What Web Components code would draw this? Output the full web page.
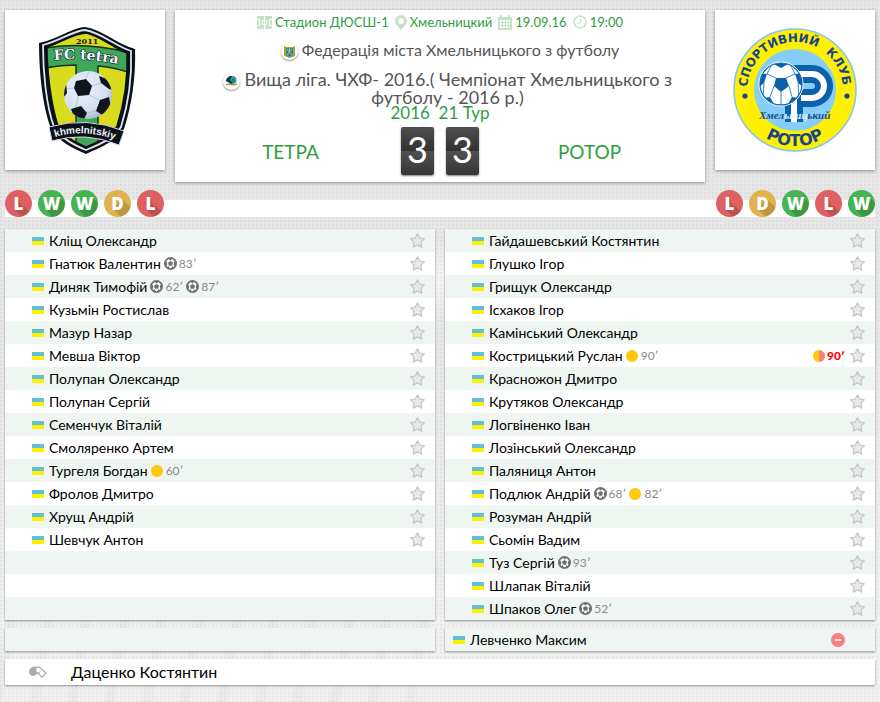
<!DOCTYPE html>
<html lang="uk">
<head>
  <meta charset="utf-8">
  <meta name="viewport" content="width=device-width, initial-scale=1">
  <title>Тетра - Ротор</title>
  <style>
    body {
      margin: 0;
      min-height: 100vh;
      font-family: Lato, "Open Sans", sans-serif;
      font-size: 14px;
      color: #000;
      background-color: #e6e6e6;
      background-image:
        conic-gradient(at 2px 2px, transparent 75%, rgba(0, 0, 0, 0.045) 0),
        radial-gradient(circle at 50% 40%, rgba(255, 255, 255, 0.6), transparent 40px),
        repeating-linear-gradient(100deg, transparent 0 14px, rgba(0, 0, 0, 0.025) 18px 24px, transparent 28px 37px),
        linear-gradient(#e6e6e6 0%, #e8e8e8 50%, #f1f1f1 90%);
      background-size: 4px 4px, 100% 100%, 50% 20%, 100% 100%;
      background-position: 0 0, 0 0, 0 100%, 0 0;
      background-repeat: repeat, no-repeat, no-repeat, no-repeat;
    }
  </style>
</head>
<body>

<match-page>
  <team-card slot="home"><logo-tetra></logo-tetra></team-card>
  <match-header slot="header" home="ТЕТРА" away="РОТОР" home-score="3" away-score="3">
    <meta-item slot="meta" icon="field">Стадион ДЮСШ-1</meta-item>
    <meta-item slot="meta" icon="pin">Хмельницкий</meta-item>
    <meta-item slot="meta" icon="calendar">19.09.16</meta-item>
    <meta-item slot="meta" icon="clock">19:00</meta-item>
    <span slot="federation">Федерація міста Хмельницького з футболу</span>
    <span slot="league">Вища ліга. ЧХФ- 2016.( Чемпіонат Хмельницького з футболу - 2016 р.)</span>
    <span slot="round">2016&nbsp; 21 Тур</span>
  </match-header>
  <team-card slot="away"><logo-rotor></logo-rotor></team-card>

  <form-badges slot="form" results="LWWDL"></form-badges>
  <form-badges slot="form" results="LDWLW"></form-badges>

  <team-lineup slot="lineup">
    <player-row>Кліщ Олександр</player-row>
    <player-row>Гнатюк Валентин<match-event slot="events" type="goal">83′</match-event></player-row>
    <player-row>Диняк Тимофій<match-event slot="events" type="goal">62′</match-event><match-event slot="events" type="goal">87′</match-event></player-row>
    <player-row>Кузьмін Ростислав</player-row>
    <player-row>Мазур Назар</player-row>
    <player-row>Мевша Віктор</player-row>
    <player-row>Полупан Олександр</player-row>
    <player-row>Полупан Сергій</player-row>
    <player-row>Семенчук Віталій</player-row>
    <player-row>Смоляренко Артем</player-row>
    <player-row>Тургеля Богдан<match-event slot="events" type="yellow">60′</match-event></player-row>
    <player-row>Фролов Дмитро</player-row>
    <player-row>Хрущ Андрій</player-row>
    <player-row>Шевчук Антон</player-row>
    <player-row empty></player-row>
    <player-row empty></player-row>
    <player-row empty></player-row>
  </team-lineup>
  <team-lineup slot="lineup">
    <player-row>Гайдашевський Костянтин</player-row>
    <player-row>Глушко Ігор</player-row>
    <player-row>Грищук Олександр</player-row>
    <player-row>Ісхаков Ігор</player-row>
    <player-row>Камінський Олександр</player-row>
    <player-row>Кострицький Руслан<match-event slot="events" type="yellow">90′</match-event><match-event slot="status" type="second-yellow">90′</match-event></player-row>
    <player-row>Красножон Дмитро</player-row>
    <player-row>Крутяков Олександр</player-row>
    <player-row>Логвіненко Іван</player-row>
    <player-row>Лозінський Олександр</player-row>
    <player-row>Паляниця Антон</player-row>
    <player-row>Подлюк Андрій<match-event slot="events" type="goal">68′</match-event><match-event slot="events" type="yellow">82′</match-event></player-row>
    <player-row>Розуман Андрій</player-row>
    <player-row>Сьомін Вадим</player-row>
    <player-row>Туз Сергій<match-event slot="events" type="goal">93′</match-event></player-row>
    <player-row>Шлапак Віталій</player-row>
    <player-row>Шпаков Олег<match-event slot="events" type="goal">52′</match-event></player-row>
  </team-lineup>

  <team-lineup slot="subs">
    <player-row empty></player-row>
  </team-lineup>
  <team-lineup slot="subs">
    <player-row sub>Левченко Максим</player-row>
  </team-lineup>

  <referee-bar slot="referee">Даценко Костянтин</referee-bar>
</match-page>

<script>
const ICONS = {
  field: `
    <svg width="15" height="13" viewBox="0 0 15 13">
      <rect width="15" height="13" fill="#c3e3c6"/>
      <g fill="none" stroke="#fff">
        <path d="M7.5 0v13M0 3.5h2.5v6H0M15 3.5h-2.5v6H15"/>
        <circle cx="7.500" cy="6.500" r="2.500"/>
      </g>
    </svg>`,
  pin: `
    <svg width="12" height="15" viewBox="0 0 12 15">
      <path fill="#c3e3c6" fill-rule="evenodd" d="M6 0a6 6 0 0 1 6 6c0 3-3 5-6 9C3 11 0 9 0 6a6 6 0 0 1 6-6zm0 3a3 3 0 1 0 0 6 3 3 0 0 0 0-6z"/>
    </svg>`,
  calendar: `
    <svg width="14" height="15" viewBox="0 0 14 15">
      <path fill="#c3e3c6" d="M0 2h2V0h2v2h6V0h2v2h2v13H0z"/>
      <path fill="#fff" d="M2 5h2v2H2zm3 0h2v2H5zm3 0h2v2H8zm3 0h1v2h-1zM2 8h2v2H2zm3 0h2v2H5zm3 0h2v2H8zm3 0h1v2h-1zM2 11h2v2H2zm3 0h2v2H5zm3 0h2v2H8zm3 0h1v2h-1z"/>
    </svg>`,
  clock: `
    <svg width="14" height="14" viewBox="0 0 14 14" fill="none" stroke="#c3e3c6">
      <circle cx="7" cy="7" r="6" stroke-width="1.600"/>
      <path d="M8 3.500 7.500 7.500 4.500 9" stroke-width="1.200"/>
    </svg>`,
  goal: `
    <svg width="13" height="13" viewBox="0 0 26 26">
      <circle cx="13" cy="13" r="11.200" fill="#fff" stroke="#6f6f6f" stroke-width="3.600"/>
      <path fill="#6f6f6f" d="M13 8l5 3.600-1.900 5.800H9.900L8 11.600zM7 2h12l-6 5zM1 8l5.500 3L6 17l-4 1zM25 8l-5.500 3 .5 6 4 1zM5 22l4-4 3 6zM21 22l-4-4-3 6z"/>
    </svg>`,
  yellow: `
    <svg width="12" height="12" viewBox="0 0 12 12"><circle cx="6" cy="6" r="6" fill="#ffc80a"/></svg>`,
  "second-yellow": `
    <svg width="12" height="12" viewBox="0 0 12 12">
      <path fill="#ffc80a" d="M6 0a6 6 0 0 0 0 12z"/>
      <path fill="#ff7d7d" d="M6 0a6 6 0 0 1 0 12z"/>
    </svg>`,
};

class MatchPage extends HTMLElement {
  constructor() {
    super();
    this.attachShadow({ mode: "open" });
    this.shadowRoot.innerHTML = `
      <style>
        :host {
          display: block;
          padding: 10px 5px 16px;
        }

        .top {
          display: grid;
          grid-template-columns: 160px 1fr 160px;
          align-items: start;
          gap: 10px;
        }

        .form {
          display: flex;
          justify-content: space-between;
          margin: 8px 0 12px;
          background: linear-gradient(transparent 10px, #fff 10px);
        }

        .columns {
          display: grid;
          grid-template-columns: 1fr 1fr;
          gap: 10px;
          margin-bottom: 8px;
        }
      </style>
      <header class="top">
        <slot name="home"></slot>
        <slot name="header"></slot>
        <slot name="away"></slot>
      </header>
      <div class="form"><slot name="form"></slot></div>
      <main>
        <div class="columns"><slot name="lineup"></slot></div>
        <div class="columns"><slot name="subs"></slot></div>
      </main>
      <slot name="referee"></slot>
    `;
  }
}

class TeamCard extends HTMLElement {
  constructor() {
    super();
    this.attachShadow({ mode: "open" });
    this.shadowRoot.innerHTML = `
      <style>
        :host {
          display: block;
          background: #fff;
          box-shadow: 0 1px 3px rgba(0, 0, 0, 0.4);
        }
      </style>
      <slot></slot>
    `;
  }
}

class LogoTetra extends HTMLElement {
  constructor() {
    super();
    this.attachShadow({ mode: "open" });
    this.shadowRoot.innerHTML = `
      <style>
        :host { display: block; }
        svg { display: block; width: 100%; }
      </style>
      <svg viewBox="0 0 160 160" role="img">
        <defs>
          <clipPath id="field"><path d="M81 23C67 24 58 32 42 37C42 62 46 94 53 116C60 127 70 132 81 137C95 131 106 127 112 116C119 94 123 68 122 43C108 38 96 26 81 23Z"/></clipPath>
          <clipPath id="ball"><circle cx="83" cy="85" r="24"/></clipPath>
          <radialGradient id="shade" cx="0.400" cy="0.350" r="0.700">
            <stop offset="0" stop-color="#eef3fc"/>
            <stop offset="0.700" stop-color="#d3dff0"/>
            <stop offset="1" stop-color="#9fb4c8"/>
          </radialGradient>
          <path id="name" d="M49 50Q80 47 118 55"/>
          <path id="city" d="M50 127Q80 118 114 131"/>
        </defs>
        <path fill="#0b1118" d="M80 17C66 18 56 28 34 33C34 60 37 95 46 119C54 132 68 138 81 144C97 137 112 130 119 119C127 95 131 65 130 39C112 34 98 20 80 17Z"/>
        <path fill="none" stroke="#dfe4f5" stroke-width="1.800" d="M80 20C67 21 57 30 38 35C38 61 41 95 49 117C57 129 69 135 81 140C96 134 109 128 116 117C123 95 127 67 126 41C110 36 97 23 80 20Z"/>
        <g clip-path="url(#field)">
          <rect x="34" y="17" width="96" height="127" fill="#d8dc1c"/>
          <path fill="#3fa757" stroke="#123320" stroke-width="1.500" d="M40 38Q80 31 126 43V63Q108 57 93 56V140H71V55Q55 55 40 58Z"/>
        </g>
        <path fill="none" stroke="#0b1118" stroke-width="1.500" d="M81 23C67 24 58 32 42 37C42 62 46 94 53 116C60 127 70 132 81 137C95 131 106 127 112 116C119 94 123 68 122 43C108 38 96 26 81 23Z"/>
        <circle cx="83" cy="85" r="24" fill="url(#shade)"/>
        <g clip-path="url(#ball)">
          <path fill="#10141c" d="M71 71L81 69 87 76 84 85 73 86 69 78ZM94 66L102 69 108 80 104 79 96 73ZM95 90L104 87 106 98 99 106 91 101ZM66 99L76 96 82 103 79 109 69 107ZM58 76L61 73 62 83 58 88Z"/>
          <path fill="none" stroke="#a9b9ca" stroke-width="0.700" d="M87 76L96 73M84 85L95 90M73 86L71 97M81 69L84 61M69 78L62 79M91 101L82 103"/>
        </g>
        <path fill="#0b1118" stroke="#d6d4ea" d="M44 117Q82 106 119 121L114 135Q80 121 47 131Z"/>
        <text x="71" y="34" font-family="DejaVu Serif, serif" font-weight="bold" font-size="8" fill="#14170c">2011</text>
        <text font-family="DejaVu Serif, serif" font-weight="bold" font-size="14" fill="#f6f8ff" stroke="#0b2030" stroke-width="1.200" paint-order="stroke"><textPath href="#name">FC tetra</textPath></text>
        <text font-family="Liberation Sans, sans-serif" font-weight="bold" font-size="10" fill="#f0f2f8"><textPath href="#city">khmelnitskiy</textPath></text>
      </svg>
    `;
  }
}

class LogoRotor extends HTMLElement {
  constructor() {
    super();
    this.attachShadow({ mode: "open" });
    this.shadowRoot.innerHTML = `
      <style>
        :host { display: block; }
        svg { display: block; width: 100%; }
      </style>
      <svg viewBox="0 0 160 160" role="img">
        <defs>
          <path id="upper" d="M32 80A48 48 0 0 1 128 80"/>
          <path id="lower" d="M24 80A56 56 0 0 0 136 80"/>
          <clipPath id="ball"><circle cx="66" cy="74" r="21"/></clipPath>
        </defs>
        <circle cx="80" cy="80" r="61" fill="#fff000" stroke="#86c6ee" stroke-width="1.600"/>
        <circle cx="80" cy="80" r="41" fill="#86cdf8"/>
        <g fill="none">
          <path stroke="#0a62ac" stroke-width="18" d="M79 112V64H97A12 12 0 0 1 97 88H79"/>
          <path stroke="#fff" stroke-width="6" d="M79 112V64H97A12 12 0 0 1 97 88H86"/>
        </g>
        <circle cx="66" cy="74" r="22" fill="#fff" stroke="#fff"/>
        <circle cx="66" cy="74" r="21" fill="#fff" stroke="#0a62ac" stroke-width="1.200"/>
        <g clip-path="url(#ball)">
          <path fill="#0a62ac" d="M61 68H71L74 76 66 82 59 76ZM57 53H75L66 58ZM43 63L52 64 49 73 43 78ZM89 63L80 64 83 73 89 78ZM48 88L55 87 60 96 50 96ZM84 88L77 87 72 96 82 96Z"/>
          <path fill="none" stroke="#0a62ac" stroke-width="0.800" d="M61 68L52 64M71 68L80 64M74 76L77 87M66 82V96M59 76L55 87M52 64L57 54M80 64L75 54M49 73L48 88M83 73L84 88M60 95H72"/>
        </g>
        <circle cx="30" cy="86" r="2.600" fill="#17458c"/>
        <circle cx="132" cy="86" r="2.600" fill="#17458c"/>
        <text x="44" y="109" font-family="Liberation Serif, serif" font-style="italic" font-weight="bold" font-size="11" fill="#1b4a86">Хмел<tspan fill="#e6f2fc">ьниц</tspan>ький</text>
        <g font-weight="bold" fill="#17458c">
          <text font-family="DejaVu Sans, sans-serif" font-size="12"><textPath href="#upper" startOffset="3">СПОРТИВНИЙ</textPath></text>
          <text font-family="DejaVu Sans, sans-serif" font-size="12"><textPath href="#upper" startOffset="108">КЛУБ</textPath></text>
          <text font-family="DejaVu Sans, sans-serif" font-size="16" text-anchor="middle"><textPath href="#lower" startOffset="50%">РОТОР</textPath></text>
        </g>
      </svg>
    `;
  }
}

class MetaItem extends HTMLElement {
  connectedCallback() {
    this.attachShadow({ mode: "open" });
    this.shadowRoot.innerHTML = `
      <style>
        :host {
          display: flex;
          align-items: center;
          gap: 3px;
        }

        svg { display: block; }
      </style>
      ${ICONS[this.getAttribute("icon")]}
      <span><slot></slot></span>
    `;
  }
}

class MatchHeader extends HTMLElement {
  connectedCallback() {
    this.attachShadow({ mode: "open" });
    this.render();
  }

  render = () => {
    this.shadowRoot.innerHTML = `
      <style>
        :host {
          display: block;
          padding: 4px 5px 7px;
          background: #fff;
          box-shadow: 0 1px 3px rgba(0, 0, 0, 0.4);
          text-align: center;
          color: #555;
        }

        .meta {
          display: flex;
          justify-content: center;
          gap: 6px;
          font-size: 13px;
          line-height: 16px;
          color: #2f9e41;
        }

        h2, h1 {
          margin: 0;
          font-weight: normal;
        }

        h2 {
          margin-top: 10px;
          padding-left: 20px;
          font-size: 16px;
          line-height: 20px;
        }

        h1 {
          margin-top: 10px;
          padding: 0 25px 0 40px;
          font-size: 18px;
          line-height: 18px;
        }

        .crest {
          display: inline-block;
          width: 17px;
          height: 17px;
          margin: -4px 0;
          border-radius: 50%;
          background: #fff;
          box-shadow: 0 1px 2px rgba(0, 0, 0, 0.45);
          vertical-align: middle;
        }

        .round {
          font-size: 17px;
          line-height: 14px;
          color: #2f9e41;
        }

        .board {
          display: grid;
          grid-template-columns: 1fr auto 1fr;
          align-items: center;
          margin-top: 7px;
        }

        a {
          color: #2f9e41;
          font-size: 19px;
          text-decoration: none;
        }

        .score {
          display: flex;
          gap: 12px;
        }

        .digit {
          width: 33px;
          padding-bottom: 4px;
          border-radius: 2px;
          background: linear-gradient(#505050, #323232 49%, #777 49%, #777 51%, #505050 51%, #363636);
          box-shadow: 0 1px 2px rgba(0, 0, 0, 0.5);
          color: #fff;
          font-size: 36px;
          line-height: 44px;
        }
      </style>
      <div class="meta"><slot name="meta"></slot></div>
      <h2>
        <svg class="crest" viewBox="0 0 17 17" aria-hidden="true">
          <path fill="#a9a62a" d="M3 3l2 1h7l2-1v10l-5.500 2L3 13z"/>
          <path fill="#1d86c4" d="M5 5h7v7l-3.500 2L5 12z"/>
          <path fill="none" stroke="#c9c43c" d="M6 6l5 6M11 6l-5 6M8.500 5v4"/>
        </svg>
        <slot name="federation"></slot>
      </h2>
      <h1>
        <svg class="crest" viewBox="0 0 17 17" aria-hidden="true">
          <circle cx="9.500" cy="7" r="4" fill="#2b9cc6"/>
          <path fill="#14323f" d="M3 8c0-3 3-5 6-5L7 7l3 3-2 1z"/>
          <path fill="none" stroke="#a8a232" stroke-width="1.500" d="M3 12c3-2 7 1 11-1"/>
          <path fill="#2f7d3b" d="M9 6l2-1 1 3-2 2z"/>
        </svg>
        <slot name="league"></slot>
      </h1>
      <div class="round"><slot name="round"></slot></div>
      <div class="board">
        <a href="#home">${this.getAttribute("home")}</a>
        <div class="score">
          <span class="digit">${this.getAttribute("home-score")}</span>
          <span class="digit">${this.getAttribute("away-score")}</span>
        </div>
        <a href="#away">${this.getAttribute("away")}</a>
      </div>
    `;
  };
}

class FormBadges extends HTMLElement {
  connectedCallback() {
    const colors = { W: "#46b450", L: "#de6060", D: "#e0b34f" };
    // long shadow that runs from the letter to the lower right
    const shadows = {
      W: "M8 20L22 8 40 26V40H28z",
      L: "M10 20L13 8 17 16 19 16 40 37V40H30z",
      D: "M10 20L16 8 20 11 40 31V40H30z",
    };

    this.attachShadow({ mode: "open" });
    this.shadowRoot.innerHTML = `
      <style>
        :host {
          display: flex;
          gap: 6px;
        }

        svg {
          display: block;
          width: 27px;
          height: 27px;
        }

        text {
          font: 800 17px "Open Sans", sans-serif;
        }
      </style>
      ${[...this.getAttribute("results")].map((r) => `
        <svg viewBox="0 0 27 27">
          <clipPath id="round"><circle cx="13.500" cy="13.500" r="13.500"/></clipPath>
          <g clip-path="url(#round)">
            <rect width="27" height="27" fill="${colors[r]}"/>
            <path fill="#000" fill-opacity="0.150" d="${shadows[r]}"/>
          </g>
          <text x="13.500" y="20" text-anchor="middle" fill="#fff">${r}</text>
        </svg>`).join("")}
    `;
  }
}

class TeamLineup extends HTMLElement {
  constructor() {
    super();
    this.attachShadow({ mode: "open" });
    this.shadowRoot.innerHTML = `
      <style>
        :host {
          display: block;
          background: #fff;
          box-shadow: 0 1px 2px rgba(0, 0, 0, 0.4);
        }

        ::slotted(:nth-child(odd)) {
          background: #eff6f2;
        }
      </style>
      <slot></slot>
    `;
  }
}

class PlayerRow extends HTMLElement {
  connectedCallback() {
    this.attachShadow({ mode: "open" });
    this.render();
  }

  render = () => {
    const star = `
      <button type="button" aria-label="Додати до обраного">
        <svg width="15" height="15" viewBox="0 0 15 15">
          <path fill="#e9e9e9" stroke="#c4c4c4" stroke-width="1.200" stroke-linejoin="round" d="M7.500 0.800l2.200 4.200 4.600.8-3.300 3.400.7 4.900-4.200-2.200-4.200 2.200.7-4.900L.7 5.800l4.600-.8z"/>
        </svg>
      </button>`;
    const minus = `
      <svg width="14" height="14" viewBox="0 0 14 14">
        <circle cx="7" cy="7" r="7" fill="#ff7d7d"/>
        <path fill="#fff" d="M4 6h6v2H4z"/>
      </svg>`;

    this.shadowRoot.innerHTML = `
      <style>
        :host {
          display: flex;
          align-items: center;
          gap: 3px;
          height: 23px;
          padding: 0 10px 0 27px;
          line-height: 22px;
        }

        :host([sub]) {
          padding: 0 30px 0 8px;
        }

        .flag {
          width: 12px;
          height: 8px;
          margin-right: 2px;
          background: linear-gradient(#62bfd8 50%, #fdf100 50%);
        }

        a {
          color: inherit;
          text-decoration: none;
        }

        .right {
          display: flex;
          align-items: center;
          gap: 5px;
          margin-left: auto;
        }

        button {
          padding: 0;
          border: 0;
          background: none;
          cursor: pointer;
        }

        svg { display: block; }
      </style>
      ${this.hasAttribute("empty") ? "" : `
        <span class="flag"></span>
        <a href="#player"><slot></slot></a>
        <slot name="events"></slot>
        <span class="right">
          <slot name="status"></slot>
          ${this.hasAttribute("sub") ? minus : star}
        </span>`}
    `;
  };
}

class MatchEvent extends HTMLElement {
  connectedCallback() {
    this.attachShadow({ mode: "open" });
    this.shadowRoot.innerHTML = `
      <style>
        :host {
          display: flex;
          align-items: center;
          gap: 2px;
          font-size: 12px;
          color: #8a8a8a;
        }

        :host([type="second-yellow"]) {
          color: #f00;
          font-weight: 900;
        }

        :host([type="yellow"]) {
          gap: 3px;
        }

        svg { display: block; }
      </style>
      ${ICONS[this.getAttribute("type")]}
      <slot></slot>
    `;
  }
}

class RefereeBar extends HTMLElement {
  constructor() {
    super();
    this.attachShadow({ mode: "open" });
    this.shadowRoot.innerHTML = `
      <style>
        :host {
          display: flex;
          align-items: center;
          gap: 24px;
          padding-left: 24px;
          background: #fff;
          box-shadow: 0 1px 2px rgba(0, 0, 0, 0.4);
          font-size: 16px;
          line-height: 26px;
        }
      </style>
      <svg width="18" height="12" viewBox="0 0 18 12">
        <path fill="#aaa" d="M8 0.500C4 0 0 2 0 5.500S3 10.500 6 9.500L9 7 7 5z"/>
        <path fill="#fff" stroke="#aaa" stroke-width="1.200" d="M7 1.500L10 .8 17 7 13 11.300 9.500 7.500 6.500 5.500z"/>
        <path fill="none" stroke="#aaa" d="M9.500 7.500L11 5.500"/>
      </svg>
      <slot></slot>
    `;
  }
}

window.customElements.define("match-page", MatchPage);
window.customElements.define("team-card", TeamCard);
window.customElements.define("logo-tetra", LogoTetra);
window.customElements.define("logo-rotor", LogoRotor);
window.customElements.define("meta-item", MetaItem);
window.customElements.define("match-header", MatchHeader);
window.customElements.define("form-badges", FormBadges);
window.customElements.define("team-lineup", TeamLineup);
window.customElements.define("player-row", PlayerRow);
window.customElements.define("match-event", MatchEvent);
window.customElements.define("referee-bar", RefereeBar);
</script>
</body>
</html>
